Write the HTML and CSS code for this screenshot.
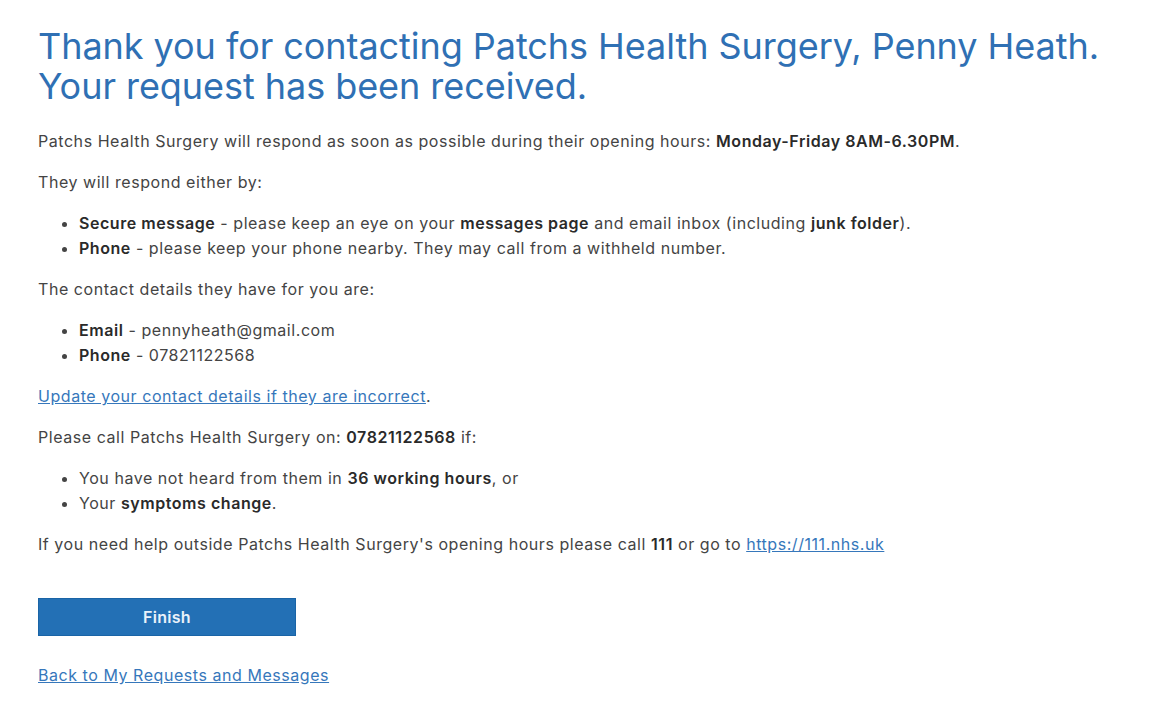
FILE: index.html
```html
<!DOCTYPE html>
<html lang="en">
<head>
<meta charset="UTF-8">
<title>Request received</title>
<link rel="stylesheet" href="styles.css">
</head>
<body>
<div class="container">
<h1 class="title">Thank you for contacting Patchs Health Surgery, Penny Heath. Your request has been received.</h1>

<p>Patchs Health Surgery will respond as soon as possible during their opening hours: <b>Monday-Friday 8AM-6.30PM</b>.</p>

<p>They will respond either by:</p>
<ul>
<li><b>Secure message</b> - please keep an eye on your <b>messages page</b> and email inbox (including <b>junk folder</b>).</li>
<li><b>Phone</b> - please keep your phone nearby. They may call from a withheld number.</li>
</ul>

<p>The contact details they have for you are:</p>
<ul>
<li><b>Email</b> - pennyheath@gmail.com</li>
<li><b>Phone</b> - 07821122568</li>
</ul>

<p><a href="#">Update your contact details if they are incorrect</a>.</p>

<p>Please call Patchs Health Surgery on: <b>07821122568</b> if:</p>
<ul>
<li>You have not heard from them in <b>36 working hours</b>, or</li>
<li>Your <b>symptoms change</b>.</li>
</ul>

<p>If you need help outside Patchs Health Surgery's opening hours please call <b>111</b> or go to <a href="#">https://111.nhs.uk</a></p>

<div class="actions">
<button class="button">Finish</button>
</div>

<p class="back"><a href="#">Back to My Requests and Messages</a></p>
</div>
</body>
</html>
```

FILE: styles.css
```css
body {
margin: 0;
background-color: #fff;
font-family: "Inter", "Noto Sans", sans-serif;
font-size: 16px;
letter-spacing: 0.55px;
color: #444;
}

.container {
padding: 26px 38px 0 38px;
width: 1090px;
}

.title {
margin: 0 0 23px 0;
font-size: 36px;
line-height: 40px;
font-weight: 400;
letter-spacing: -0.05px;
color: #2f70b4;
}

p {
margin: 0 0 16px 0;
line-height: 25px;
}

b {
font-weight: 600;
color: #2a2a2a;
}

ul {
margin: 0 0 16px 0;
padding-left: 41px;
line-height: 25px;
}

a {
color: #3677bb;
text-decoration: underline;
}

/* Finish button */
.actions {
margin: 41px 0 27px 0;
}

.button {
width: 258px;
height: 38px;
border: 1px solid #1a64a6;
background-color: #2370b5;
color: #eaf2fa;
font-family: inherit;
font-size: 16px;
font-weight: 600;
letter-spacing: 0.3px;
cursor: pointer;
}

.button:hover {
background-color: #1d64a3;
}
```
